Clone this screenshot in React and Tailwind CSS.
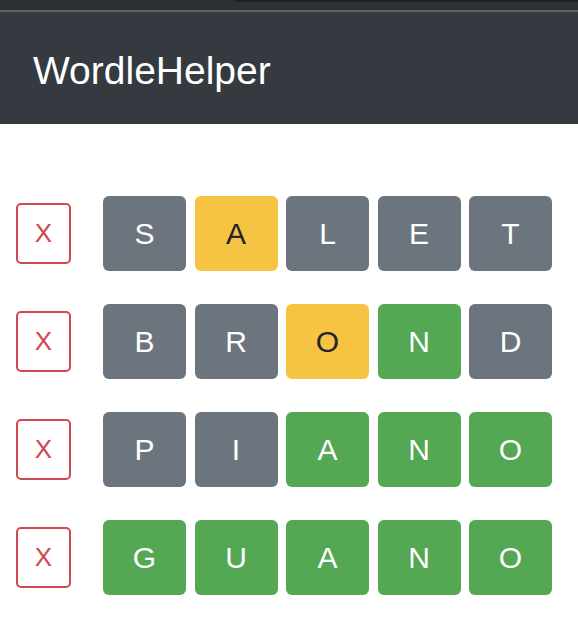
import React from 'react';

const guesses = [
  { word: 'SALET', colors: ['g', 'y', 'g', 'g', 'g'] },
  { word: 'BROND', colors: ['g', 'g', 'y', 'c', 'g'] },
  { word: 'PIANO', colors: ['g', 'g', 'c', 'c', 'c'] },
  { word: 'GUANO', colors: ['c', 'c', 'c', 'c', 'c'] },
];

const tileClass = {
  g: 'bg-[#6c757d] text-white',
  y: 'bg-[#f6c343] text-[#212529]',
  c: 'bg-[#54a753] text-white',
};

const App = () => {
  return (
    <div className="min-h-screen bg-white" style={{ fontFamily: '"Liberation Sans", Arial, sans-serif' }}>
      {/* Window chrome strip */}
      <div className="relative h-[10px] bg-[#2e3034] overflow-hidden">
        <div className="absolute left-[232px] right-0 top-[-4px] h-[6px] rounded-bl-[6px] bg-[#1f2023]"></div>
      </div>
      <div className="h-[2px] bg-[#606165]"></div>

      {/* Header */}
      <div className="h-[112px] bg-[#343a40] flex items-center px-[33px] pt-[5px]">
        <span className="text-white text-[39px] leading-none">WordleHelper</span>
      </div>

      {/* Guesses */}
      <div className="pt-[72px] flex flex-col gap-[33px]">
        {guesses.map((g, r) => (
          <div key={r} className="flex items-center">
            <button className="ml-[16px] w-[55px] h-[61px] border-2 border-[#d0484f] rounded-[5px] text-[#d0484f] text-[26px] flex items-center justify-center">
              X
            </button>
            <div className="ml-[32px] flex gap-[8.5px]">
              {g.word.split('').map((ch, i) => (
                <div
                  key={i}
                  className={`w-[83px] h-[75px] rounded-[6px] flex items-center justify-center text-[30px] ${tileClass[g.colors[i]]}`}
                >
                  {ch}
                </div>
              ))}
            </div>
          </div>
        ))}
      </div>
    </div>
  );
};

export default App;
